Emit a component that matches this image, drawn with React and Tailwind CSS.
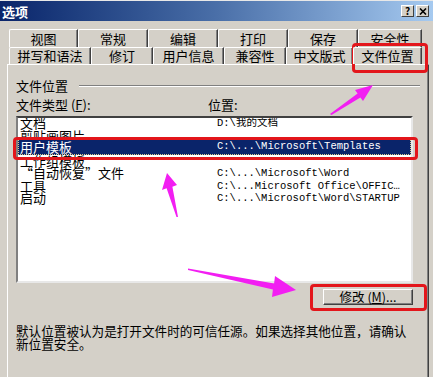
import React from 'react';

const cjk = "font-['Noto_Sans_CJK_SC','Liberation_Sans',sans-serif]";
const mono = "font-['Liberation_Mono','Noto_Sans_CJK_SC',monospace]";

const tabsBack = [
  ['视图', 69], ['常规', 70], ['编辑', 70], ['打印', 70], ['保存', 70], ['安全性', 64],
];
const tabsFront = [
  ['拼写和语法', 82], ['修订', 62], ['用户信息', 71], ['兼容性', 62], ['中文版式', 67], ['文件位置', 69],
];

const rows = [
  { name: '文档', path: 'D:\\我的文档', h: 'h-[12.5px] -mt-[1px]' },
  { name: '剪贴画图片', path: '', h: 'h-[8.5px] overflow-hidden' },
  { name: '用户模板', path: 'C:\\...\\Microsoft\\Templates', selected: true },
  { name: '工作组模板', path: '', h: 'h-[12px]' },
  { name: '“自动恢复”文件', path: 'C:\\...\\Microsoft\\Word', h: 'h-[12.5px]' },
  { name: '工具', path: 'C:\\...Microsoft Office\\OFFIC…', h: 'h-[12.5px]' },
  { name: '启动', path: 'C:\\...\\Microsoft\\Word\\STARTUP', h: 'h-[12.5px]' },
];

const Tab = ({ label, width, active }) => (
  <div
    style={{ width }}
    className={`h-full flex items-center justify-center border-t border-l border-white rounded-tl-[2px] border-r border-r-[#404040] shadow-[inset_-1px_0_0_#808080] text-[13px] text-black ${
      active ? 'relative z-10 bg-[#d4d0c8] -mb-[1px]' : 'bg-[#d4d0c8]'
    }`}
  >
    {label}
  </div>
);

const TitleButton = ({ children }) => (
  <div className="w-[13px] h-[12px] bg-[#d4d0c8] border-t border-l border-white border-r border-b border-r-[#404040] border-b-[#404040] flex items-center justify-center text-[10px] font-bold leading-none text-black">
    {children}
  </div>
);

export default function App() {
  return (
    <div className={`relative w-[433px] h-[377px] overflow-hidden bg-[#d4d0c8] ${cjk}`}>
      {/* title bar */}
      <div className="h-[21px] flex items-center justify-between pl-[2px] pr-[4px] bg-gradient-to-r from-[#0a246a] via-[#4a6fa8] to-[#a6caf0] border-t border-[#e8e8e8]">
        <span className="text-white text-[13px] font-bold leading-none">选项</span>
        <div className="flex gap-[2px]">
          <TitleButton>?</TitleButton>
          <TitleButton>
            <svg width="8" height="7" viewBox="0 0 8 7">
              <path d="M1 0.5 L7 6.5 M7 0.5 L1 6.5" stroke="#000" strokeWidth="1.6" />
            </svg>
          </TitleButton>
        </div>
      </div>

      {/* tabs */}
      <div className="pl-[9px] pt-[8px]">
        <div className="flex h-[18px]">
          {tabsBack.map(([l, w]) => (
            <Tab key={l} label={l} width={w} />
          ))}
        </div>
        <div className="flex h-[17px]">
          {tabsFront.map(([l, w], i) => (
            <Tab key={l} label={l} width={w} active={i === tabsFront.length - 1} />
          ))}
        </div>
      </div>

      {/* panel */}
      <div className="ml-[7px] w-[422px] h-[320px] border-t border-l border-white border-r border-r-[#404040] shadow-[inset_-1px_0_0_#808080] pl-[8px] text-[13px] text-black">
        <div className="mt-[14px] h-[13px] flex items-center">
          <span className="leading-none">文件位置</span>
          <div className="flex-1 ml-[11px] mr-[8px] h-[2px] border-t border-[#808080] border-b border-b-white" />
        </div>

        <div className="mt-[6px] h-[13px] flex items-center leading-none">
          <span className="w-[192px]">
            文件类型 (<span className="underline">F</span>):
          </span>
          <span>位置:</span>
        </div>

        <div className="mt-[5px] w-[397px] h-[167px] bg-white border-2 border-t-[#404040] border-l-[#808080] border-r-[#e8e8e8] border-b-[#e8e8e8] overflow-hidden">
          {rows.map((r) =>
            r.selected ? (
              <div
                key={r.name}
                className="h-[17px] flex items-center bg-[#0a246a] text-white border border-dotted border-[#d8c88a]"
              >
                <span className="w-[198px] pl-[1px] leading-none">{r.name}</span>
                <span className={`${mono} text-[10.5px] leading-none`}>{r.path}</span>
              </div>
            ) : (
              <div key={r.name} className={`flex ${r.h}`}>
                <span className="w-[199px] pl-[2px] leading-[12.5px] whitespace-nowrap">{r.name}</span>
                <span className={`${mono} text-[10.5px] leading-[12.5px] whitespace-nowrap`}>{r.path}</span>
              </div>
            )
          )}
        </div>

        <div className="w-[397px] mt-[6px] flex justify-end">
          <div className="w-[90px] h-[16px] flex items-center justify-center border-t border-l border-white border-r border-b border-r-[#404040] border-b-[#404040] shadow-[inset_-1px_-1px_0_#808080] text-[12.5px] leading-none">
            修改 (<span className="underline">M</span>)...
          </div>
        </div>

        <p className="mt-[20px] text-[12.6px] leading-[12.5px] whitespace-nowrap">
          默认位置被认为是打开文件时的可信任源。如果选择其他位置，请确认
          <br />
          新位置安全。
        </p>
      </div>

      {/* annotations: red boxes */}
      <div className="absolute left-[352px] top-[43px] w-[76px] h-[30px] border-[3px] border-[#e3161b] rounded-[4px]" />
      <div className="absolute left-[13px] top-[137px] w-[405px] h-[23px] border-[3px] border-[#e3161b] rounded-[4px]" />
      <div className="absolute left-[310px] top-[284px] w-[117px] h-[27px] border-[3px] border-[#e3161b] rounded-[4px]" />

      {/* annotations: magenta arrows */}
      <svg className="absolute inset-0 pointer-events-none" width="433" height="377" viewBox="0 0 433 377">
        <polygon fill="#f21ef2" points="330,114 357.6,93.4 355,90 373,85 363,101 360.4,97.6 331.5,115" />
        <polygon fill="#f21ef2" points="176.5,217 166.6,188.2 162,190 167,173 177,185 172.4,186.8 178,217" />
        <polygon fill="#f21ef2" points="188,268.5 274.1,283.6 275,276 296,290 272,297 272.9,289.4 188,270" />
      </svg>
    </div>
  );
}
